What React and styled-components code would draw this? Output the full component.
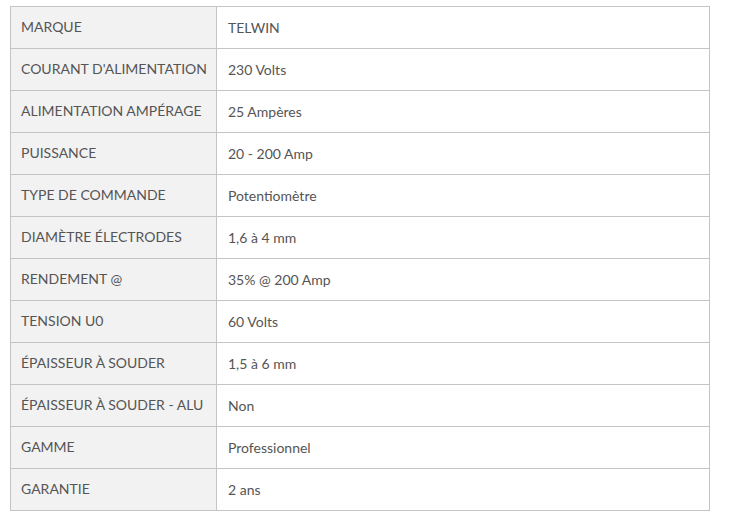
import React from 'react';
import styled, { createGlobalStyle } from 'styled-components';

const specs = [
  ['MARQUE', 'TELWIN'],
  ["COURANT D'ALIMENTATION", '230 Volts'],
  ['ALIMENTATION AMPÉRAGE', '25 Ampères'],
  ['PUISSANCE', '20 - 200 Amp'],
  ['TYPE DE COMMANDE', 'Potentiomètre'],
  ['DIAMÈTRE ÉLECTRODES', '1,6 à 4 mm'],
  ['RENDEMENT @', '35% @ 200 Amp'],
  ['TENSION U0', '60 Volts'],
  ['ÉPAISSEUR À SOUDER', '1,5 à 6 mm'],
  ['ÉPAISSEUR À SOUDER - ALU', 'Non'],
  ['GAMME', 'Professionnel'],
  ['GARANTIE', '2 ans'],
];

const GlobalStyle = createGlobalStyle`
  body {
    margin: 0;
    background: #fff;
    font-family: Lato, "Liberation Sans", sans-serif;
  }
`;

const Wrapper = styled.div`
  padding: 6px 0 0 10px;
`;

const SpecTable = styled.table`
  width: 700px;
  table-layout: fixed;
  border-collapse: collapse;
  border: 1px solid #c4c4c4;
  font-size: 14px;
  color: #555;
`;

const Row = styled.tr`
  height: 42px;
`;

const Cell = styled.td`
  border: 1px solid #c4c4c4;
  padding: 0 10px;
  vertical-align: middle;
  white-space: nowrap;
  background: ${props => (props.$label ? '#f2f2f2' : '#fff')};
  width: ${props => (props.$label ? '185px' : 'auto')};
  padding-bottom: ${props => (props.$label ? '2px' : '0')};
  padding-left: ${props => (props.$label ? '10px' : '11px')};
`;

const App = () => {
  return (
    <Wrapper>
      <GlobalStyle />
      <SpecTable>
        <tbody>
          {specs.map(([label, value]) => (
            <Row key={label}>
              <Cell $label>{label}</Cell>
              <Cell>{value}</Cell>
            </Row>
          ))}
        </tbody>
      </SpecTable>
    </Wrapper>
  );
};

export default App;
